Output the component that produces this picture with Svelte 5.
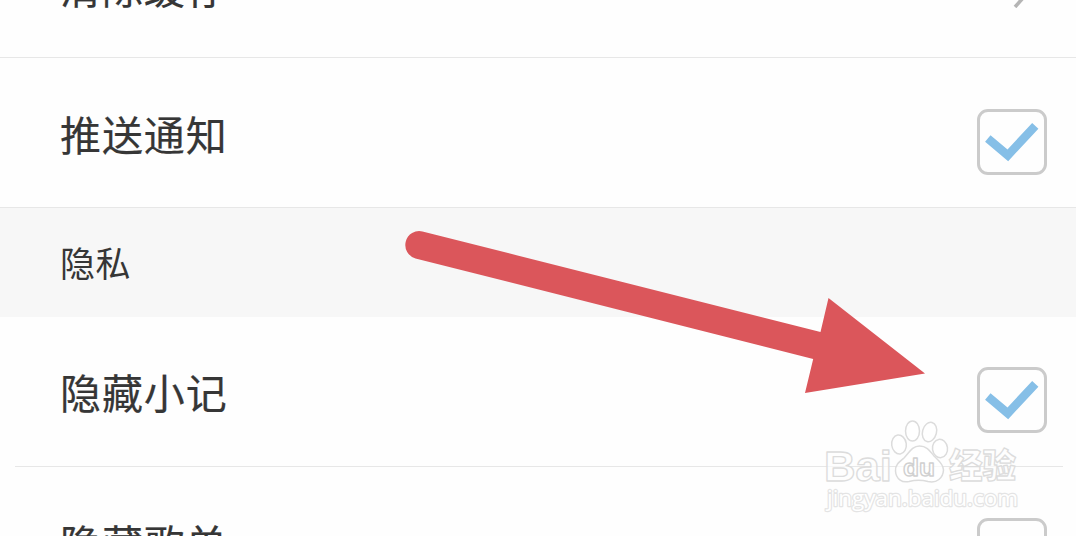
<script lang="ts">
  type Row = { label: string; kind: 'link' | 'check'; checked?: boolean; place: string };

  const general: Row[] = [
    { label: '清除缓存', kind: 'link', place: 'first' },
    { label: '推送通知', kind: 'check', checked: true, place: 'middle' }
  ];

  const privacy: Row[] = [
    { label: '隐藏小记', kind: 'check', checked: true, place: 'inset' },
    { label: '隐藏歌单', kind: 'check', checked: false, place: 'last' }
  ];
</script>

{#snippet settingRow(row: Row)}
  <div class="row {row.place}">
    <span class="label">{row.label}</span>
    {#if row.kind === 'link'}
      <svg class="chevron" width="20" height="36" viewBox="0 0 20 36" aria-hidden="true">
        <path d="M2 2L17 18L2 35" />
      </svg>
    {:else}
      <span class="checkbox" role="checkbox" aria-checked={row.checked} aria-label={row.label} tabindex="0">
        {#if row.checked}
          <svg width="64" height="60" viewBox="0 0 64 60" aria-hidden="true">
            <path d="M7.8 26.6L27.8 43.3L55.3 13.8" />
          </svg>
        {/if}
      </span>
    {/if}
  </div>
{/snippet}

<main class="settings">
  {#each general as row (row.label)}
    {@render settingRow(row)}
  {/each}
  <h2 class="section">隐私</h2>
  {#each privacy as row (row.label)}
    {@render settingRow(row)}
  {/each}

  <svg class="overlay" width="1076" height="536" viewBox="0 0 1076 536">
    <path
      class="arrow"
      d="M422.5 231.5L820.5 332L828.5 298L925 373.5L805 393L813.2 359L415.5 258.4A13.9 13.9 0 0 1 422.5 231.5Z"
    />
    <g class="watermark">
      <ellipse cx="899" cy="444.5" rx="7.3" ry="9.5" transform="rotate(-8 899 444.5)" />
      <ellipse cx="912.5" cy="431" rx="7" ry="10" />
      <ellipse cx="929.5" cy="432" rx="7" ry="9.8" transform="rotate(15 929.5 432)" />
      <ellipse cx="940" cy="448.5" rx="7.5" ry="9.2" transform="rotate(-8 940 448.5)" />
      <path
        d="M919.5 446C912 446 909 453 904 458C899 462 895 465 895.5 471C896 479 902 483 909 481.5C915 480 922 480 928 481.5C937 483.5 943 478 943.5 470C943.5 464 938 460 934 456C930 451 927 446 919.5 446Z"
      />
      <text class="latin" x="824" y="480.5" font-size="43" textLength="68" lengthAdjust="spacingAndGlyphs">Bai</text>
      <text class="latin du" x="903" y="476" font-size="24" textLength="32" lengthAdjust="spacingAndGlyphs">du</text>
      <text class="cjk" x="949" y="478" font-size="34" textLength="67" lengthAdjust="spacingAndGlyphs">经验</text>
      <text class="url" x="827" y="506" font-size="22" textLength="191" lengthAdjust="spacingAndGlyphs">jingyan.baidu.com</text>
    </g>
  </svg>
</main>

<style>
  :global(body) {
    background: #fefefe;
  }

  .settings {
    position: relative;
    width: 1076px;
    height: 536px;
    overflow: hidden;
    background: #fefefe;
    color: #363636;
    font-family: 'Noto Sans CJK SC', sans-serif;
  }

  .row {
    box-sizing: border-box;
    display: flex;
    align-items: flex-start;
    justify-content: space-between;
    height: 150px;
    padding: 51px 29px 0 60px;
    border-bottom: 1px solid #e7e7e7;
  }

  .label {
    font-size: 41px;
    letter-spacing: 0.9px;
    line-height: 56px;
    -webkit-text-stroke: 0.2px #363636;
  }

  .row.first {
    height: 58px;
    align-items: flex-end;
    padding: 0 43px 43px 60px;
  }

  .row.inset {
    margin: 0 13px 0 15px;
    padding: 50px 16px 0 45px;
  }

  .row.last {
    border-bottom: none;
  }

  .middle .label,
  .inset .label,
  .last .label {
    margin-top: -4px;
  }

  .section {
    box-sizing: border-box;
    height: 109px;
    margin: 0;
    padding: 30px 60px 0;
    background: #f7f7f7;
    font-size: 35px;
    font-weight: 400;
    letter-spacing: 0.5px;
    line-height: 48px;
  }

  .checkbox {
    box-sizing: border-box;
    flex: none;
    width: 70px;
    height: 66px;
    border: 3px solid #cbcbcb;
    border-radius: 11px;
  }

  .checkbox svg {
    display: block;
  }

  .checkbox path {
    fill: none;
    stroke: #86bfe7;
    stroke-width: 8.5;
  }

  .chevron {
    flex: none;
    margin-bottom: 6px;
  }

  .chevron path {
    fill: none;
    stroke: #b5b5b5;
    stroke-width: 3.6;
  }

  .overlay {
    position: absolute;
    top: 0;
    left: 0;
    pointer-events: none;
  }

  .arrow {
    fill: #db565b;
  }

  .watermark {
    fill: #fff;
    fill-opacity: 0.65;
    stroke: #dcdcdc;
    stroke-width: 1.5;
  }

  .watermark text {
    stroke-width: 1.3;
    stroke-linejoin: round;
  }

  .watermark .du {
    stroke: #d0d0d0;
  }

  .watermark .url {
    fill-opacity: 1;
    stroke: #e4e4e4;
    stroke-width: 2.4;
    paint-order: stroke;
  }

  .latin {
    font-family: 'Liberation Sans', sans-serif;
    font-weight: 700;
  }

  .cjk {
    font-family: 'Noto Sans CJK SC', sans-serif;
    font-weight: 900;
  }

  .url {
    font-family: 'Open Sans', sans-serif;
  }
</style>
